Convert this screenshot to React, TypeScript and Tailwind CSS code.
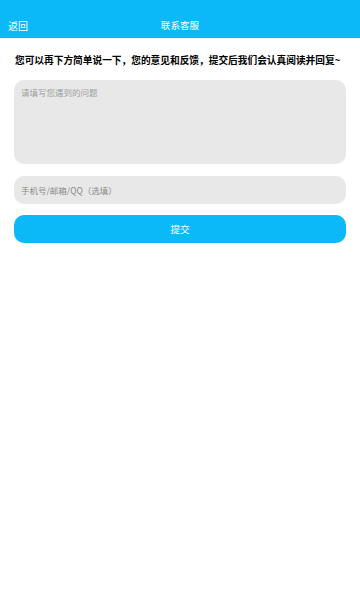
import React, { useState } from 'react';

const font = { fontFamily: '"Noto Sans CJK SC", "Noto Sans", sans-serif' };

const App: React.FC = () => {
  const [problem, setProblem] = useState('');
  const [contact, setContact] = useState('');

  return (
    <div className="min-h-screen bg-white" style={font}>
      <div className="relative flex h-[38px] items-end justify-center bg-[#0bb9f9] pb-[5px]">
        <button className="absolute bottom-[5px] left-[8px] text-[10px] leading-[14px] text-white">返回</button>
        <h1 className="text-[9.6px] leading-[16px] text-white">联系客服</h1>
      </div>
      <div className="px-[14px]">
        <p className="mt-[14px] whitespace-nowrap pl-px text-[9.7px] font-bold leading-[16px] text-black">
          您可以再下方简单说一下，您的意见和反馈，提交后我们会认真阅读并回复~
        </p>
        <textarea
          value={problem}
          onChange={(e) => setProblem(e.target.value)}
          placeholder="请填写您遇到的问题"
          className="mt-[12px] block h-[84px] w-full resize-none rounded-[10px] bg-[#e8e8e8] px-[7px] py-[5px] text-[8.5px] leading-[14px] text-black placeholder:text-[#a0a0a0] outline-none"
        />
        <input
          value={contact}
          onChange={(e) => setContact(e.target.value)}
          placeholder="手机号/邮箱/QQ（选填）"
          className="mt-[12px] block h-[28px] w-full rounded-[10px] bg-[#e8e8e8] px-[7px] text-[8.5px] text-black placeholder:text-[#8a8a8a] outline-none"
        />
        <button className="mt-[11px] block h-[28px] w-full rounded-[10px] bg-[#0bb9f9] text-[9.6px] text-white">
          提交
        </button>
      </div>
    </div>
  );
};

export default App;
